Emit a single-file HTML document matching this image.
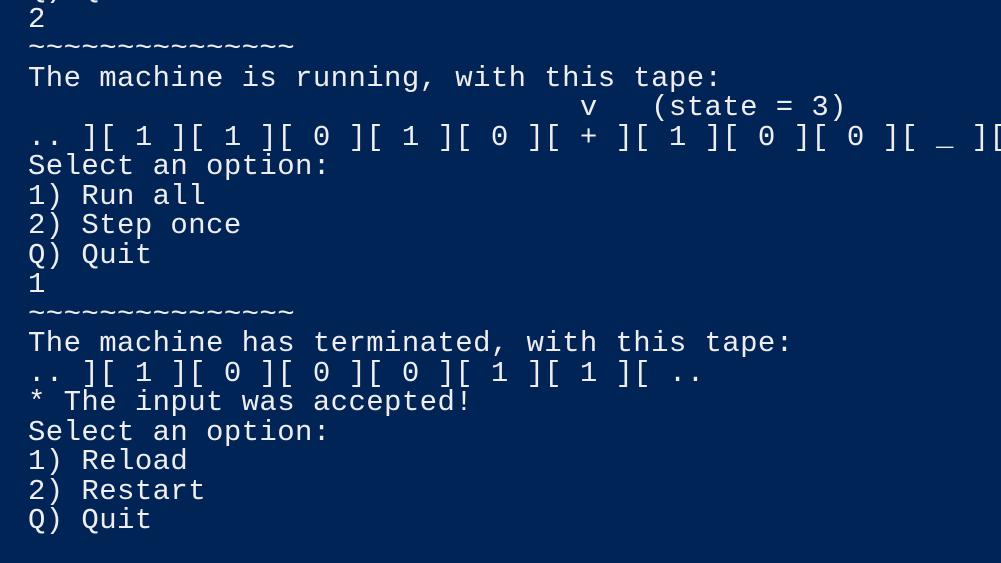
<!DOCTYPE html>
<html><head><meta charset="utf-8"><style>
html,body{margin:0;padding:0;}
body{width:1001px;height:563px;background:#012456;overflow:hidden;position:relative;}
pre{position:absolute;left:28px;top:-25px;width:973px;height:588px;overflow:hidden;margin:0;font-family:"Liberation Mono",monospace;font-size:29px;letter-spacing:0.4px;line-height:29.5px;color:#eeedf0;white-space:pre;}
</style></head><body>
<pre>Q) Quit
2
~~~~~~~~~~~~~~~
The machine is running, with this tape:
                               v   (state = 3)
.. ][ 1 ][ 1 ][ 0 ][ 1 ][ 0 ][ + ][ 1 ][ 0 ][ 0 ][ _ ][ _ ][
Select an option:
1) Run all
2) Step once
Q) Quit
1
~~~~~~~~~~~~~~~
The machine has terminated, with this tape:
.. ][ 1 ][ 0 ][ 0 ][ 0 ][ 1 ][ 1 ][ ..
* The input was accepted!
Select an option:
1) Reload
2) Restart
Q) Quit</pre>
</body></html>
